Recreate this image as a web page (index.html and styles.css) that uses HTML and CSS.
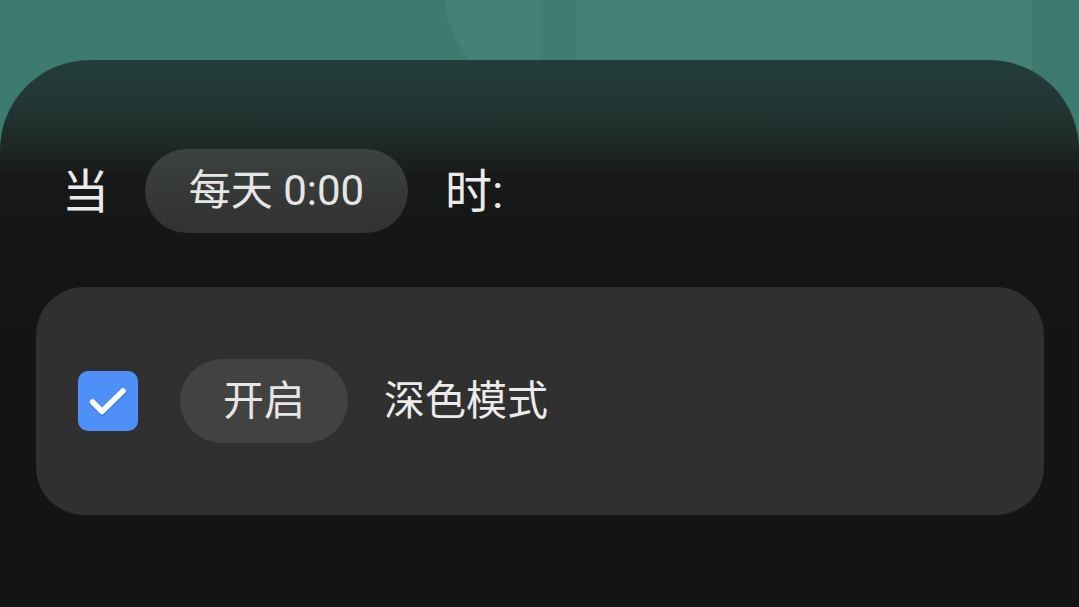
FILE: index.html
```html
<!DOCTYPE html>
<html lang="zh">
<head>
<meta charset="utf-8">
<link rel="stylesheet" href="styles.css">
</head>
<body>
<div class="backdrop">
  <div class="bg-panel"></div>
  <div class="bg-strip"></div>
  <div class="bg-edge"></div>
</div>
<main class="sheet">
  <div class="rule-row">
    <span class="label label-lg">当</span>
    <span class="pill pill-time">每天 0:00</span>
    <span class="label label-lg">时:</span>
  </div>
  <section class="card">
    <span class="checkbox">
      <svg width="60" height="60" viewBox="0 0 60 60">
        <path d="M14.5 31 L24 40.5 L45 20" fill="none" stroke="#1d4fb0" stroke-opacity="0.35" stroke-width="6" stroke-linecap="round" stroke-linejoin="round" transform="translate(0 1.5)"/>
        <path d="M14.5 31 L24 40.5 L45 20" fill="none" stroke="#ffffff" stroke-width="5.5" stroke-linecap="round" stroke-linejoin="round"/>
      </svg>
    </span>
    <span class="pill pill-action">开启</span>
    <span class="label">深色模式</span>
  </section>
</main>
</body>
</html>
```

FILE: styles.css
```css
html, body {
  margin: 0;
  padding: 0;
}
body {
  width: 1079px;
  height: 607px;
  overflow: hidden;
  background: #3d7b71;
  font-family: Roboto, "Noto Sans CJK SC", "Noto Sans", sans-serif;
  color: #e9e9e9;
  position: relative;
}
.backdrop {
  position: absolute;
  left: 0;
  top: 0;
  width: 1079px;
  height: 120px;
}
.bg-panel {
  position: absolute;
  left: 444px;
  top: -200px;
  width: 588px;
  height: 300px;
  background: #458175;
  border-radius: 0 0 0 110px;
}
.bg-strip {
  position: absolute;
  left: 540px;
  top: 0;
  width: 36px;
  height: 100px;
  background: #3f7d72;
}
.bg-edge {
  position: absolute;
  left: 1032px;
  top: 0;
  width: 47px;
  height: 100px;
  background: #3c7a70;
}
.sheet {
  position: relative;
  margin-top: 60px;
  height: 547px;
  box-sizing: border-box;
  border-radius: 90px 90px 0 0;
  background: linear-gradient(180deg, #243d3a 0px, #223633 45px, #1e2826 85px, #171818 120px, #151515 200px, #141414 100%);
  padding-top: 89px;
}
.rule-row {
  display: flex;
  align-items: center;
  padding-left: 62px;
  height: 84px;
}
.label {
  font-size: 41px;
  line-height: 1;
  color: #ebebeb;
}
.label-lg {
  font-size: 47px;
}
.pill {
  display: inline-flex;
  align-items: center;
  justify-content: center;
  height: 84px;
  border-radius: 42px;
  font-size: 41px;
  line-height: 1;
  color: #e6e6e6;
  box-sizing: border-box;
}
.pill-time {
  margin: 0 37px 0 36px;
  width: 263px;
  font-size: 42px;
  background: linear-gradient(180deg, #3b4241 0%, #363938 50%, #313232 100%);
}
.card {
  margin: 54px 0 0 36px;
  width: 1008px;
  height: 228px;
  border-radius: 48px;
  background: #303030;
  display: flex;
  align-items: center;
  padding-left: 42px;
  box-sizing: border-box;
}
.checkbox {
  width: 60px;
  height: 60px;
  border-radius: 10px;
  background: #4f8ff8;
  display: block;
}
.checkbox svg {
  display: block;
}
.pill-action {
  margin: 0 36px 0 42px;
  width: 168px;
  background: #424242;
}
```
